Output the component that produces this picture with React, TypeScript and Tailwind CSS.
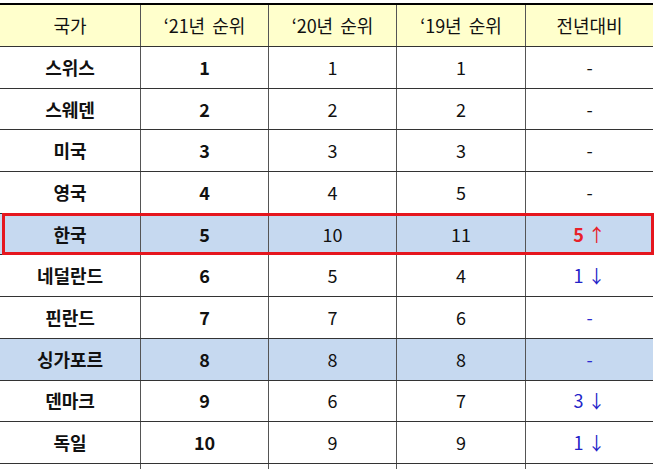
import React from "react";

type Row = {
  country: string;
  r21: string;
  r20: string;
  r19: string;
  diff: React.ReactNode;
  blue?: boolean;
  boxed?: boolean;
};

const dash = <span>-</span>;
const blueDash = <span className="text-[#2b2bd0]">-</span>;
const down = (n: number) => (
  <span className="text-[#2323c8]">
    {n}
    <span className="ml-[4px]">↓</span>
  </span>
);

const rows: Row[] = [
  { country: "스위스", r21: "1", r20: "1", r19: "1", diff: dash },
  { country: "스웨덴", r21: "2", r20: "2", r19: "2", diff: dash },
  { country: "미국", r21: "3", r20: "3", r19: "3", diff: dash },
  { country: "영국", r21: "4", r20: "4", r19: "5", diff: dash },
  {
    country: "한국",
    r21: "5",
    r20: "10",
    r19: "11",
    blue: true,
    boxed: true,
    diff: (
      <span className="text-[#e8202a]">
        <span className="font-bold">5</span>
        <span className="ml-[4px]">↑</span>
      </span>
    ),
  },
  { country: "네덜란드", r21: "6", r20: "5", r19: "4", diff: down(1) },
  { country: "핀란드", r21: "7", r20: "7", r19: "6", diff: blueDash },
  { country: "싱가포르", r21: "8", r20: "8", r19: "8", diff: blueDash, blue: true },
  { country: "덴마크", r21: "9", r20: "6", r19: "7", diff: down(3) },
  { country: "독일", r21: "10", r20: "9", r19: "9", diff: down(1) },
];

const cols = "grid grid-cols-[140px_128px_128px_129px_128px]";
const cell = "flex items-center justify-center border-l border-[#555]";

export default function App() {
  return (
    <div
      className="w-[658px] h-[469px] overflow-hidden bg-white text-[18px] text-[#111]"
      style={{ fontFamily: '"Noto Sans CJK KR", "Noto Sans", sans-serif' }}
    >
      <div className="w-[653px] pt-[3px]">
        {/* header */}
        <div className={`${cols} h-[44px] bg-[#ffffcc] border-t-2 border-b border-t-black border-b-[#333] [word-spacing:3px]`}>
          <div className="flex items-center justify-center">국가</div>
          <div className={cell}>‘21년 순위</div>
          <div className={cell}>‘20년 순위</div>
          <div className={cell}>‘19년 순위</div>
          <div className={cell}>전년대비</div>
        </div>

        {rows.map((r) => (
          <div
            key={r.country}
            className={`${cols} relative h-[41.7px] border-b border-[#333] ${r.blue ? "bg-[#c6d9f0]" : ""}`}
          >
            <div className="flex items-center justify-center font-bold">{r.country}</div>
            <div className={`${cell} font-bold`}>{r.r21}</div>
            <div className={cell}>{r.r20}</div>
            <div className={cell}>{r.r19}</div>
            <div className={cell}>{r.diff}</div>
            {r.boxed && (
              <div className="absolute left-[2px] right-[-1px] top-[-1px] bottom-[-1px] border-[3px] border-[#e5161e]" />
            )}
          </div>
        ))}

        {/* trailing stub below last row */}
        <div className={`${cols} h-[8px]`}>
          <div />
          <div className="border-l border-[#555]" />
          <div className="border-l border-[#555]" />
          <div className="border-l border-[#555]" />
          <div className="border-l border-[#555]" />
        </div>
      </div>
    </div>
  );
}
